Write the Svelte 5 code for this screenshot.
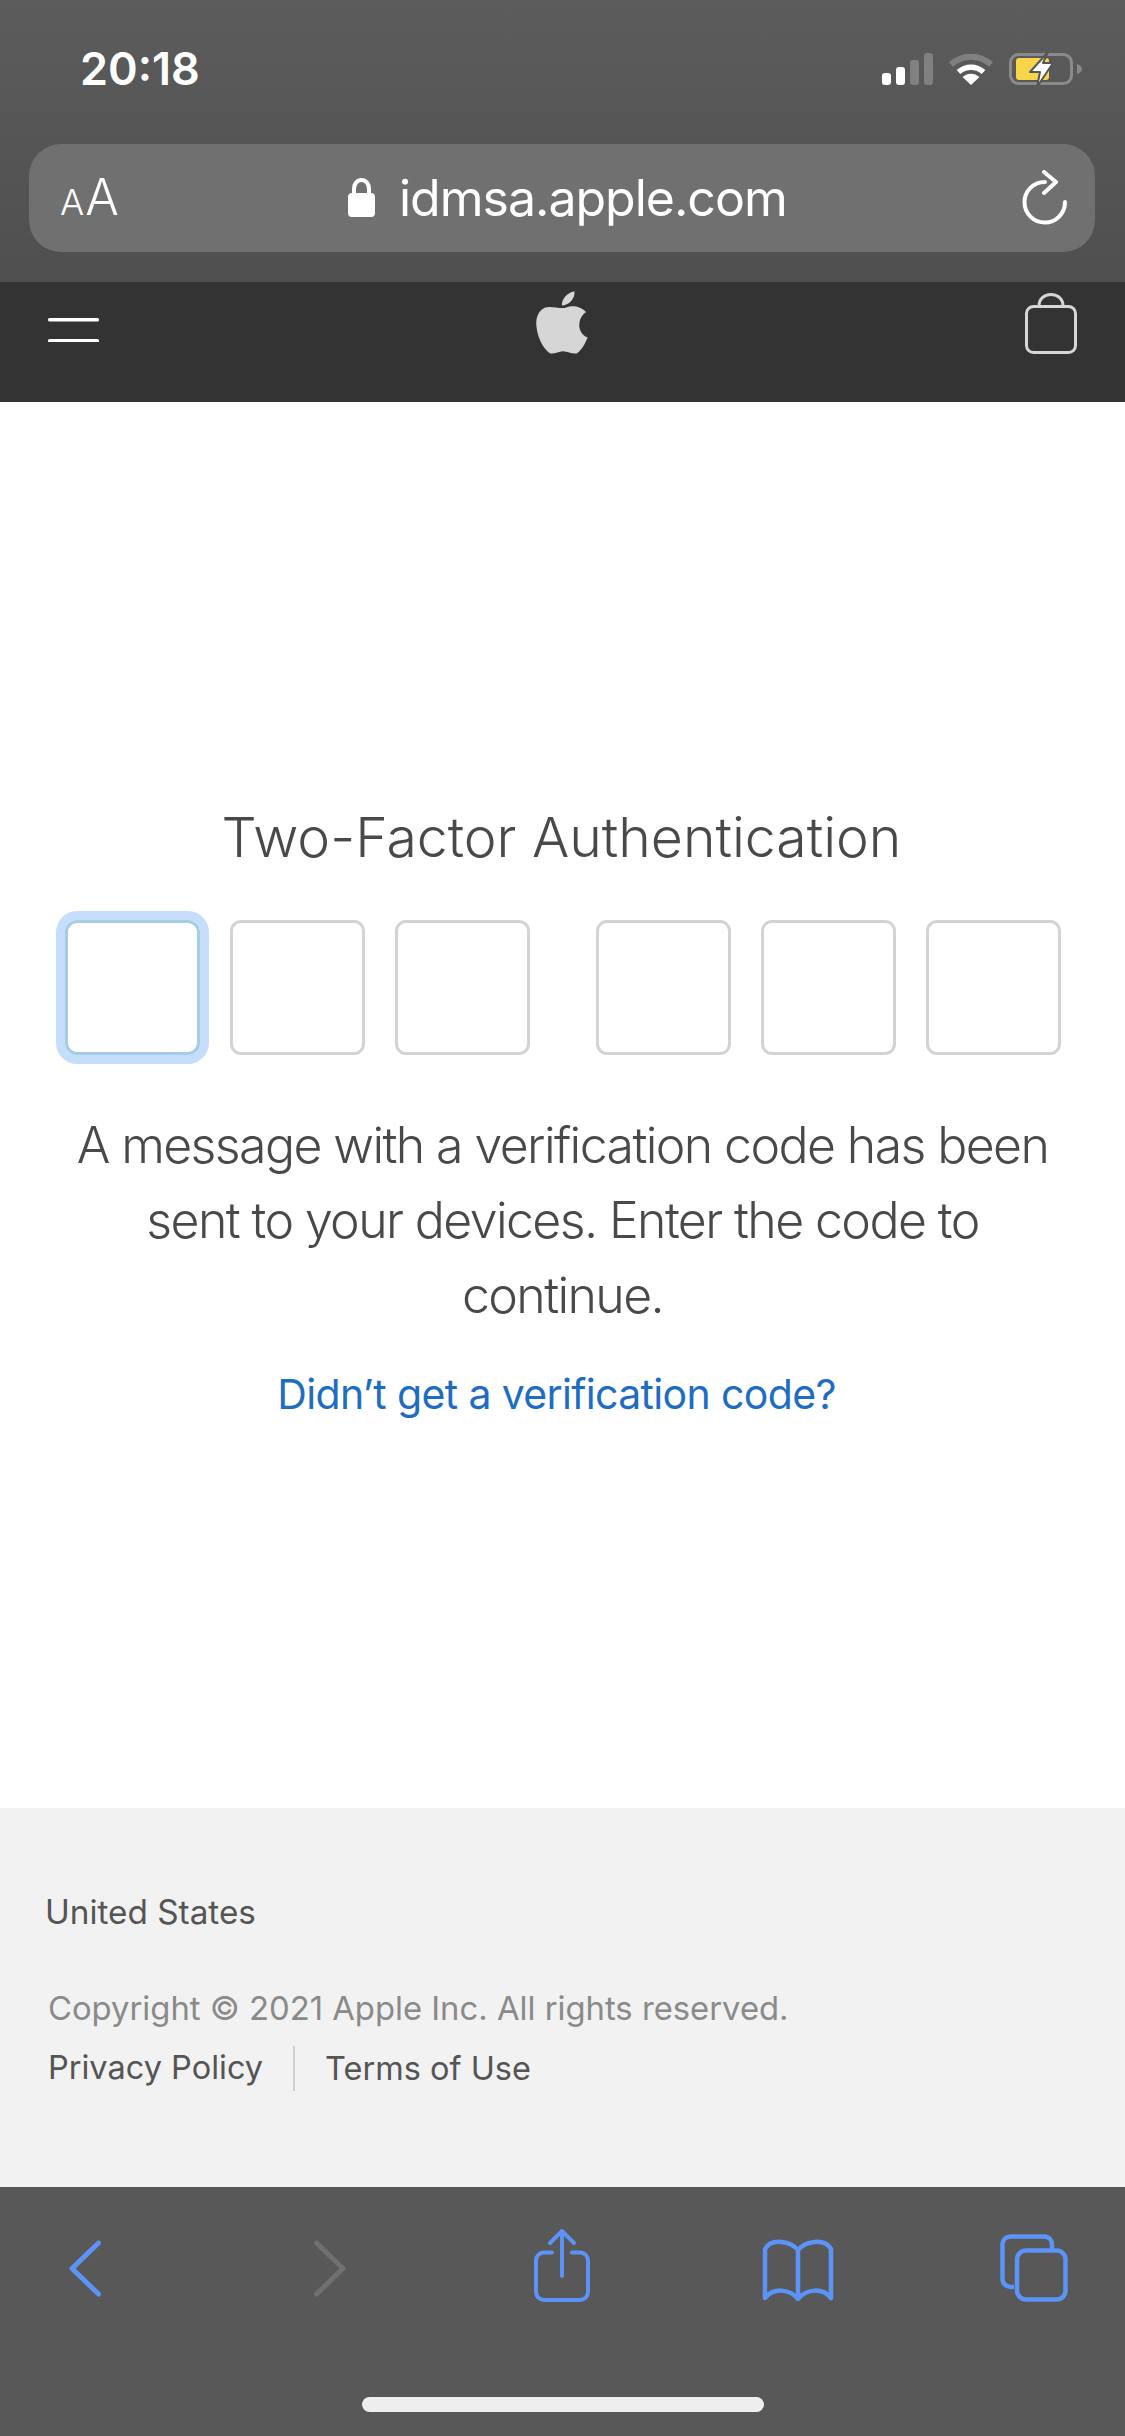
<script>
  const codeGroups = [[true, false, false], [false, false, false]];
</script>

<div class="phone">
  <header class="chrome">
    <div class="status">
      <span class="time">20:18</span>
      <div class="status-icons">
        <svg class="signal" width="51" height="32" viewBox="0 0 51 32">
          <rect x="0" y="20" width="9" height="12" rx="3" fill="#fff" />
          <rect x="14" y="14" width="9" height="18" rx="3" fill="#fff" />
          <rect x="28" y="7" width="9" height="25" rx="3" fill="#808080" />
          <rect x="42" y="0" width="9" height="32" rx="3" fill="#808080" />
        </svg>
        <svg class="wifi" width="46" height="33" viewBox="0 0 46 33">
          <path d="M3 12.5C14 2 32 2 43 12.5" fill="none" stroke="#808080" stroke-width="6" />
          <path d="M10.5 20C17.5 13.5 28.5 13.5 35.500 20" fill="none" stroke="#fff" stroke-width="5.500" />
          <path d="M14.500 25C19.500 20.500 26.500 20.500 31.500 25L23 33Z" fill="#fff" />
        </svg>
        <svg class="battery" width="73" height="36" viewBox="0 0 73 36">
          <rect x="1.500" y="2.500" width="61" height="29" rx="8" fill="none" stroke="#8a8a8a" stroke-width="3" />
          <path d="M68 12C71 13 73 15 73 17C73 19 71 21 68 22Z" fill="#8a8a8a" />
          <rect x="7" y="6" width="33" height="22" rx="3" fill="#f8d54a" />
          <path d="M39 0L21 20H31L28 35L44 11H34Z" fill="#fff" stroke="#565656" stroke-width="2" stroke-linejoin="round" />
        </svg>
      </div>
    </div>
    <div class="url-bar">
      <span class="aa"><span class="aa-small">A</span><span class="aa-big">A</span></span>
      <div class="address">
        <svg width="27" height="39" viewBox="0 0 27 39">
          <path d="M6 17V11C6 6 9 2 13.500 2C18 2 21 6 21 11V17" fill="none" stroke="#fff" stroke-width="4" />
          <rect x="0" y="15" width="27" height="24" rx="4" fill="#fff" />
        </svg>
        <span class="host">idmsa.apple.com</span>
      </div>
      <svg class="reload" width="46" height="56" viewBox="0 0 46 56">
        <path d="M23 12C11.500 12 2.500 21 2.500 32C2.500 43.500 11.500 52.500 23 52.500C34 52.500 43 43.500 43 32" fill="none" stroke="#fff" stroke-width="4" stroke-linecap="round" />
        <path d="M22 2L34 12L22 23" fill="none" stroke="#fff" stroke-width="4" stroke-linecap="round" stroke-linejoin="round" />
      </svg>
    </div>
  </header>

  <nav class="site-nav">
    <svg class="menu" width="51" height="24" viewBox="0 0 51 24">
      <rect y="0" width="51" height="3.500" rx="1.500" fill="#fff" />
      <rect y="21" width="51" height="3.500" rx="1.500" fill="#fff" />
    </svg>
    <svg class="apple" width="58" height="70" viewBox="100 50 175 210">
      <path d="M190 113C170 113 150 106 135 112C118 120 108 140 110 165C112 195 128 235 152 250C165 252 178 243 190 243C205 243 218 252 232 250C248 240 258 218 265 202C245 193 238 175 240 160C241 145 250 132 260 125C248 110 225 105 210 108C203 110 197 113 190 113Z" fill="#d6d6d6" />
      <path d="M225 62C205 65 186 85 187 105C207 105 228 85 225 62Z" fill="#d6d6d6" />
    </svg>
    <svg class="bag" width="52" height="61" viewBox="0 0 52 61">
      <path d="M14 13C14 6 19 1.500 26 1.500C33 1.500 38 6 38 13" fill="none" stroke="#d6d6d6" stroke-width="3" />
      <rect x="1.500" y="13.500" width="49" height="46" rx="7" fill="none" stroke="#d6d6d6" stroke-width="3" />
    </svg>
  </nav>

  <main class="content">
    <h1>Two-Factor Authentication</h1>
    <div class="code">
      {#each codeGroups as group}
        <div class="code-group">
          {#each group as focused}
            <div class="digit" class:focused></div>
          {/each}
        </div>
      {/each}
    </div>
    <p class="message">A message with a verification code has been sent to your devices. Enter the code to continue.</p>
    <a class="resend" href="#resend">Didn’t get a verification code?</a>
  </main>

  <footer class="site-footer">
    <div class="country">United States</div>
    <div class="copyright">Copyright © 2021 Apple Inc. All rights reserved.</div>
    <div class="legal">
      <span class="legal-link">Privacy Policy</span>
      <span class="legal-link second">Terms of Use</span>
    </div>
  </footer>

  <div class="toolbar">
    <div class="tools">
      <svg class="back" width="36" height="59" viewBox="0 0 36 59">
        <path d="M31.500 4L5 29.500L31.500 55" fill="none" stroke="#5b93f7" stroke-width="5" stroke-linecap="round" stroke-linejoin="round" />
      </svg>
      <svg class="forward" width="36" height="59" viewBox="0 0 36 59">
        <path d="M4.500 4L31 29.500L4.500 55" fill="none" stroke="#707070" stroke-width="5" stroke-linecap="round" stroke-linejoin="round" />
      </svg>
      <svg class="share" width="56" height="76" viewBox="0 0 56 76">
        <path d="M18 24.500H10C5.500 24.500 2 28 2 32.500V64C2 68.500 5.500 72 10 72H46C50.500 72 54 68.500 54 64V32.500C54 28 50.500 24.500 46 24.500H38" fill="none" stroke="#5b93f7" stroke-width="4" stroke-linecap="round" />
        <path d="M28 3V48M16 15L28 3L40 15" fill="none" stroke="#5b93f7" stroke-width="4" stroke-linecap="round" stroke-linejoin="round" />
      </svg>
      <svg class="book" width="72" height="64" viewBox="0 0 72 64">
        <path d="M36 12V61M36 12C29 4 10 -1 3 11V60C11 50 27 50 36 61C45 50 61 50 69 60V11C62 -1 43 4 36 12Z" transform="translate(0 1)" fill="none" stroke="#5b93f7" stroke-width="4.500" stroke-linecap="round" stroke-linejoin="round" />
      </svg>
      <svg class="tabs" width="68" height="68" viewBox="0 0 68 68">
        <path d="M14 53H11C6 53 2.500 49.500 2.500 45V11C2.500 6 6 2.500 11 2.500H44C49 2.500 52 6 52 11V15" fill="none" stroke="#5b93f7" stroke-width="4.500" />
        <rect x="17" y="16.500" width="48.500" height="49" rx="9" fill="none" stroke="#5b93f7" stroke-width="4.500" />
      </svg>
    </div>
    <div class="home-indicator"></div>
  </div>
</div>

<style>
  :global(body) {
    margin: 0;
    background: #fff;
  }

  .phone {
    width: 1125px;
    height: 2436px;
    display: flex;
    flex-direction: column;
    overflow: hidden;
    font-family: Inter, "Liberation Sans", sans-serif;
  }

  .chrome {
    height: 282px;
    box-sizing: border-box;
    padding: 0 30px 0 29px;
    background: linear-gradient(#5c5c5c, #4f4f4f);
  }

  .status {
    height: 144px;
    box-sizing: border-box;
    padding: 40px 0 0 51px;
    display: flex;
    justify-content: space-between;
    align-items: flex-start;
  }

  .time {
    color: #fff;
    font-size: 45px;
    line-height: 58px;
    font-weight: 600;
  }

  .status-icons {
    display: flex;
    align-items: flex-start;
    gap: 15px;
    margin: 12px 13px 0 0;
  }

  .signal {
    margin-top: 1px;
  }

  .url-bar {
    height: 108px;
    background: #707070;
    border-radius: 32px;
    position: relative;
    display: flex;
    align-items: center;
    justify-content: space-between;
    padding: 0 27px 0 31px;
    color: #fff;
  }

  .aa {
    display: flex;
    align-items: baseline;
    gap: 1px;
    font-weight: 300;
    line-height: 60px;
    margin-top: 2px;
  }

  .aa-small {
    font-size: 36px;
  }

  .aa-big {
    font-size: 50px;
  }

  .address {
    position: absolute;
    left: 319px;
    top: 0;
    height: 108px;
    display: flex;
    align-items: center;
    gap: 24px;
  }

  .address svg {
    margin-top: -1px;
  }

  .host {
    font-size: 50px;
    letter-spacing: -1px;
    font-weight: 400;
  }

  .site-nav {
    height: 120px;
    box-sizing: border-box;
    background: #333;
    display: flex;
    justify-content: space-between;
    align-items: flex-start;
    padding: 0 48px;
  }

  .menu {
    margin-top: 36px;
  }

  .apple {
    margin-top: 5px;
  }

  .bag {
    margin-top: 11px;
  }

  .content {
    flex: 1;
    background: #fff;
    display: flex;
    flex-direction: column;
    align-items: center;
    color: #494949;
  }

  h1 {
    margin: 395px 2px 0 0;
    font-size: 55.300px;
    line-height: 80px;
    font-weight: 300;
  }

  .code {
    margin-top: 43px;
    display: flex;
    gap: 66px;
    align-self: flex-start;
    padding-left: 65px;
  }

  .code-group {
    display: flex;
    gap: 30px;
  }

  .digit {
    width: 135px;
    height: 135px;
    box-sizing: border-box;
    border: 3px solid #d3d3d3;
    border-radius: 11px;
  }

  .digit.focused {
    border-color: #a3cee4;
    box-shadow: 0 0 0 9px #c6ddfb;
    border-radius: 12px;
  }

  .message {
    margin: 53px 0 0;
    width: 1000px;
    text-align: center;
    font-size: 50px;
    letter-spacing: -1.600px;
    line-height: 75px;
    font-weight: 300;
  }

  .resend {
    margin: 31px 12px 0 0;
    color: #1f6dc2;
    font-size: 41px;
    letter-spacing: -0.65px;
    line-height: 60px;
    text-decoration: none;
  }

  .site-footer {
    height: 379px;
    box-sizing: border-box;
    background: #f2f2f2;
    padding: 84px 0 0 45px;
    font-size: 32.800px;
    line-height: 40px;
    color: #555;
  }

  .country {
    font-size: 33.300px;
  }

  .copyright {
    margin: 56px 0 0 3px;
    color: #8a8a8a;
  }

  .legal {
    margin: 20px 0 0 3px;
    display: flex;
    align-items: center;
    height: 40px;
    font-size: 32.500px;
  }

  .legal-link.second {
    margin-left: 30px;
    padding-left: 30px;
    border-left: 2.500px solid #cfcfcf;
    line-height: 45px;
  }

  .toolbar {
    height: 249px;
    background: #585858;
    position: relative;
  }

  .tools {
    display: flex;
    align-items: flex-start;
    padding-left: 67px;
  }

  .back {
    margin-top: 52px;
  }

  .forward {
    margin: 52px 0 0 209px;
  }

  .share {
    margin: 41px 0 0 186px;
  }

  .book {
    margin: 50px 0 0 172px;
  }

  .tabs {
    margin: 47px 0 0 166px;
  }

  .home-indicator {
    position: absolute;
    left: 362px;
    top: 210px;
    width: 402px;
    height: 15px;
    border-radius: 8px;
    background: #eee;
  }
</style>
